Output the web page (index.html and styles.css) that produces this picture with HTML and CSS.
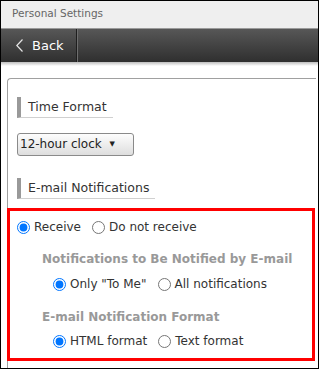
FILE: index.html
```html
<!DOCTYPE html>
<html>
<head>
<meta charset="utf-8">
<link rel="stylesheet" href="styles.css">
</head>
<body>
<div class="frame">
  <div class="titlebar">Personal Settings</div>
  <div class="navbar">
    <div class="back">
      <svg class="chev" width="7" height="13" viewBox="0 0 7 13"><path d="M6.5 0.5 L0.8 6.5 L6.5 12.5" fill="none" stroke="#e6e6e6" stroke-width="1.2"/></svg>
      <span>Back</span>
    </div>
    <div class="navfill"></div>
  </div>
  <div class="navshadow"></div>
  <div class="content">
    <div class="panel">
      <div class="heading">Time Format</div>
      <div class="select">12-hour clock <span class="arrow">&#9660;</span></div>
      <div class="heading heading2">E-mail Notifications</div>
      <div class="row row1">
        <label class="opt"><input type="radio" name="recv" checked><span>Receive</span></label>
        <label class="opt"><input type="radio" name="recv"><span>Do not receive</span></label>
      </div>
      <div class="sub">
        <div class="sublabel sl1">Notifications to Be Notified by E-mail</div>
        <div class="row row2">
          <label class="opt"><input type="radio" name="scope" checked><span>Only "To Me"</span></label>
          <label class="opt"><input type="radio" name="scope"><span>All notifications</span></label>
        </div>
        <div class="sublabel sl2">E-mail Notification Format</div>
        <div class="row row3">
          <label class="opt"><input type="radio" name="fmt" checked><span>HTML format</span></label>
          <label class="opt"><input type="radio" name="fmt"><span>Text format</span></label>
        </div>
      </div>
    </div>
  </div>
  <div class="highlight"></div>
</div>
</body>
</html>
```
FILE: styles.css
```css
html, body { margin: 0; padding: 0; background: #fff; }
.frame {
  width: 319px; height: 369px; box-sizing: border-box;
  border: 1px solid #000; position: relative; overflow: hidden;
  font-family: "DejaVu Sans", Verdana, sans-serif; color: #333; background: #fff;
}
.titlebar {
  height: 27px; line-height: 25px; padding-left: 11px;
  font-size: 10.5px; color: #666; background: #efefef;
  border-bottom: 1px solid #9a9a9a;
}
.navbar { height: 33px; display: flex; background: linear-gradient(#575757, #2f2f2f); }
.back {
  width: 76px; box-sizing: border-box; display: flex; align-items: center;
  gap: 9px; padding-left: 15px; color: #fff; font-size: 13px;
  border-right: 1px solid #1e1e1e; box-shadow: 1px 0 0 #6e6e6e;
}
.chev { display: block; }
.navfill { flex: 1; }
.navshadow { height: 4px; background: linear-gradient(#bdbdbd, #fff); }
.content { padding: 12px 2px 0 6px; }
.panel {
  border: 1px solid #a0a0a0; border-right: none; border-bottom: none;
  border-top-left-radius: 4px; padding: 18px 0 0 9px; height: 400px;
}
.heading {
  width: fit-content; border-left: 4px solid #999; border-bottom: 1px solid #d0d0d0;
  height: 20px; line-height: 20px; padding: 0 6px 0 7px; font-size: 12.5px;
}
.heading2 { margin-top: 22px; }
.select {
  margin-top: 15px; width: 117px; height: 23px; box-sizing: border-box;
  border: 1px solid #8a8a8a; border-radius: 3px;
  background: linear-gradient(#fdfdfd, #dedede);
  font-size: 12px; line-height: 21px; padding-left: 2px; color: #222;
}
.arrow { font-size: 7px; vertical-align: 2px; margin-left: 4px; }
.row { display: flex; height: 20px; align-items: center; font-size: 12px; }
.opt { display: flex; align-items: center; gap: 4px; margin-right: 11px; }
.opt input { margin: 0; width: 13px; height: 13px; }
.row1 { margin-top: 18px; }
.sub { padding-left: 25px; }
.sublabel { font-size: 12px; font-weight: bold; color: #999; height: 20px; line-height: 20px; }
.sl1 { margin-top: 12px; }
.row2 { margin-top: 5px; padding-left: 11px; }
.sl2 { margin-top: 13px; }
.row3 { margin-top: 4px; padding-left: 11px; }
.highlight {
  position: absolute; left: 6px; top: 207px; width: 308px; height: 153px;
  border: 3px solid #f00; box-sizing: border-box;
}
```
